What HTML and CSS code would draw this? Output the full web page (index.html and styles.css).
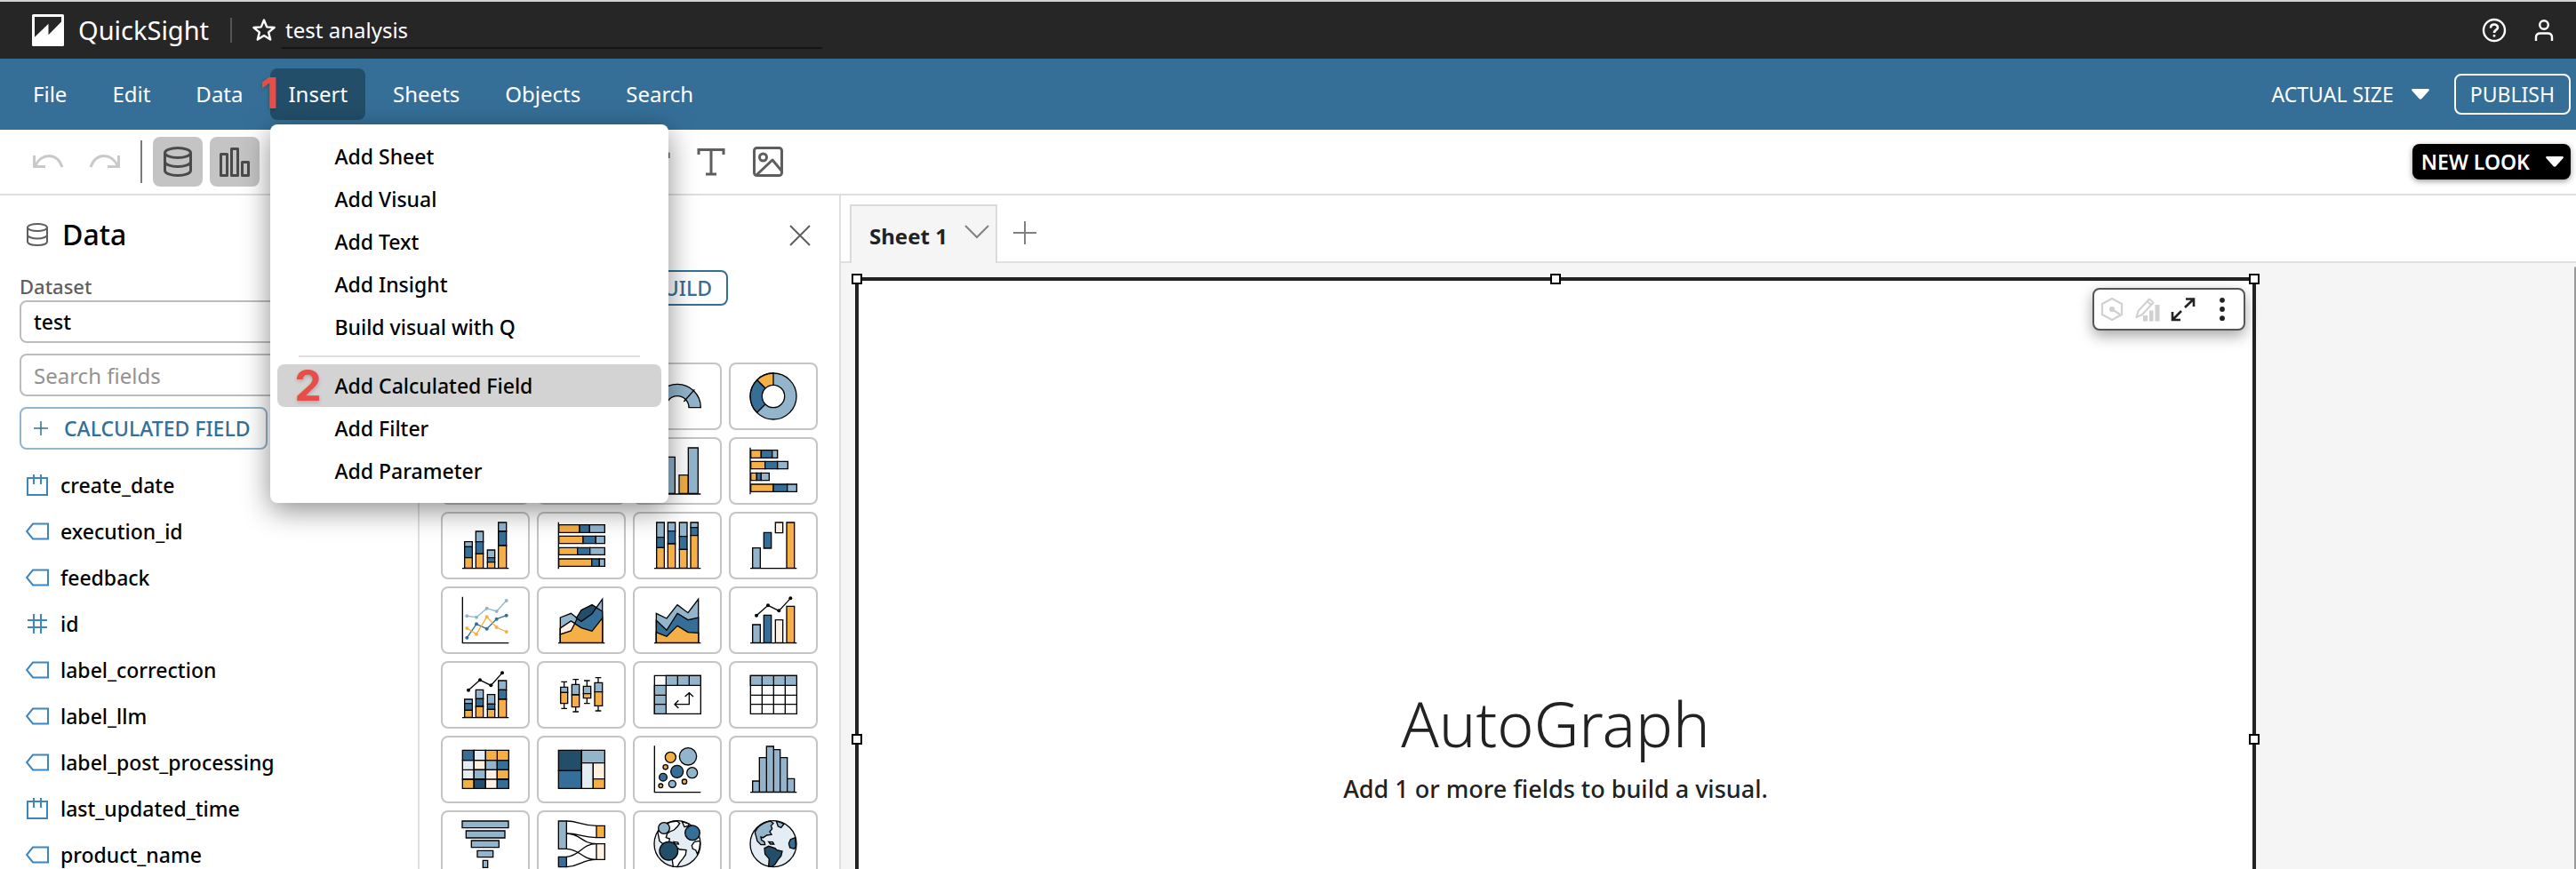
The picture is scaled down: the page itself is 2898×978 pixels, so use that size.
FILE: index.html
```html
<!DOCTYPE html>
<html lang="en">
<head>
<meta charset="utf-8">
<title>test analysis - QuickSight</title>
<link rel="stylesheet" href="styles.css">
</head>
<body>
<header class="topbar">
  <svg class="logo" viewBox="0 0 36 36" aria-hidden="true"><rect width="36" height="36" rx="1.500" fill="#fff"/><path d="M3 3H33V8.500L18.500 23.300V10.700L3 25.800Z" fill="#262626"/></svg>
  <span class="brand">QuickSight</span>
  <span class="topbar-rule"></span>
  <button class="icon-btn star" aria-label="Favorite"><svg viewBox="0 0 28 28"><path d="M14 2.500L17.200 10.400L25.600 11L19.100 16.400L21.200 24.600L14 20.100L6.800 24.600L8.900 16.400L2.400 11L10.800 10.400Z" fill="none" stroke="#fff" stroke-width="2.400" stroke-linejoin="round"/></svg></button>
  <input class="analysis-name" aria-label="Analysis name" value="test analysis">
  <div class="topbar-right">
    <button class="icon-btn" aria-label="Help"><svg viewBox="0 0 28 28" fill="none" stroke="#fff" stroke-width="2.400"><circle cx="14" cy="14" r="12"/><path d="M10 11.500C10 6 18.200 6.500 18 11C17.900 13.800 14 13.600 14 17" stroke-width="2.600"/><path d="M14 19V21.500" stroke-width="2.600"/></svg></button>
    <button class="icon-btn" aria-label="Account"><svg viewBox="0 0 28 28" fill="none" stroke="#fff" stroke-width="2.400"><circle cx="14" cy="8" r="4.800"/><path d="M5 26V22C5 19 7 17.500 10 17.500H18C21 17.500 23 19 23 22V26"/></svg></button>
  </div>
</header>

<nav class="menubar">
  <button class="menu-btn">File</button>
  <button class="menu-btn">Edit</button>
  <button class="menu-btn">Data</button>
  <div class="menu-wrap">
    <button class="menu-btn active" aria-expanded="true">Insert</button>
    <span class="step step-one">1</span>
    <div class="dropdown" role="menu">
      <button role="menuitem">Add Sheet</button>
      <button role="menuitem">Add Visual</button>
      <button role="menuitem">Add Text</button>
      <button role="menuitem">Add Insight</button>
      <button role="menuitem">Build visual with Q</button>
      <hr>
      <button role="menuitem" class="current"><span class="step step-two">2</span>Add Calculated Field</button>
      <button role="menuitem">Add Filter</button>
      <button role="menuitem">Add Parameter</button>
    </div>
  </div>
  <button class="menu-btn">Sheets</button>
  <button class="menu-btn">Objects</button>
  <button class="menu-btn">Search</button>
  <div class="menubar-right">
    <button class="zoom-btn">ACTUAL SIZE <svg class="caret" viewBox="0 0 20 12"><path d="M1 0H19Q20.500 .5 19.500 2L11.500 11Q10 12.500 8.500 11L.5 2Q-.5 .5 1 0Z" fill="currentColor"/></svg></button>
    <button class="publish">PUBLISH</button>
  </div>
</nav>

<div class="toolbar">
  <button class="tool" aria-label="Undo"><svg viewBox="0 0 56 56" fill="none" stroke="#c9c9c9" stroke-width="3"><path d="M12.500 21V33.500H25M13.500 33C20 18 38 17 44 34"/></svg></button>
  <button class="tool" aria-label="Redo"><svg viewBox="0 0 56 56" fill="none" stroke="#c9c9c9" stroke-width="3"><path d="M43.500 21V33.500H31M42.500 33C36 18 18 17 12 34"/></svg></button>
  <span class="tool-rule"></span>
  <button class="tool on" aria-label="Data"><svg viewBox="0 0 56 56" fill="none" stroke="#4a4a4a" stroke-width="3"><ellipse cx="28" cy="18" rx="14.500" ry="5.500"/><path d="M13.500 18V38C13.500 41 20 43.500 28 43.500S42.500 41 42.500 38V18M13.500 28C13.500 31 20 33.500 28 33.500S42.500 31 42.500 28"/></svg></button>
  <button class="tool on" aria-label="Visuals"><svg viewBox="0 0 56 56" fill="none" stroke="#4a4a4a" stroke-width="3" stroke-linejoin="round"><rect x="12.500" y="19.500" width="7" height="24"/><rect x="24.500" y="13.500" width="7" height="30"/><rect x="36.500" y="28.500" width="7" height="15"/></svg></button>
  <div class="tool-group">
    <button class="tool" aria-label="Draw"><svg viewBox="0 0 56 56" fill="none" stroke="#666" stroke-width="3"><path d="M14 42L38 18L44 19V24"/></svg></button>
    <button class="tool" aria-label="Text"><svg viewBox="0 0 56 56" fill="none" stroke="#5e5e5e" stroke-width="3"><path d="M14 20V14.500H42V20M28 14V42M22 42H34"/></svg></button>
    <button class="tool" aria-label="Image"><svg viewBox="0 0 56 56" fill="none" stroke="#5e5e5e" stroke-width="3" stroke-linejoin="round"><rect x="12.500" y="12.500" width="31" height="31" rx="3"/><circle cx="22.500" cy="23" r="4"/><path d="M15 43L33 26L43 38"/></svg></button>
  </div>
  <button class="new-look">NEW LOOK <svg class="caret" viewBox="0 0 20 12"><path d="M1 0H19Q20.500 .5 19.500 2L11.500 11Q10 12.500 8.500 11L.5 2Q-.5 .5 1 0Z" fill="currentColor"/></svg></button>
</div>

<div class="workspace">
  <section class="data-panel">
    <h2><svg viewBox="0 0 24 26" fill="none" stroke="#5e5e5e" stroke-width="2"><ellipse cx="12" cy="5" rx="11" ry="4"/><path d="M1 5V21C1 23.500 6 25 12 25S23 23.500 23 21V5M1 13.500C1 15.500 6 17.500 12 17.500S23 15.500 23 13.500"/></svg>Data</h2>
    <label class="field-label" for="dataset">Dataset</label>
    <select id="dataset" class="box"><option>test</option></select>
    <input class="box" type="search" aria-label="Search fields" placeholder="Search fields">
    <button class="calc"><svg viewBox="0 0 16 16" stroke="currentColor" stroke-width="1.500"><path d="M8 0V16M0 8H16"/></svg>CALCULATED FIELD</button>
    <ul class="fields">
      <li><svg viewBox="0 0 26 26"><use href="#f-date"/></svg>create_date</li>
      <li><svg viewBox="0 0 26 26"><use href="#f-tag"/></svg>execution_id</li>
      <li><svg viewBox="0 0 26 26"><use href="#f-tag"/></svg>feedback</li>
      <li><svg viewBox="0 0 26 26"><use href="#f-num"/></svg>id</li>
      <li><svg viewBox="0 0 26 26"><use href="#f-tag"/></svg>label_correction</li>
      <li><svg viewBox="0 0 26 26"><use href="#f-tag"/></svg>label_llm</li>
      <li><svg viewBox="0 0 26 26"><use href="#f-tag"/></svg>label_post_processing</li>
      <li><svg viewBox="0 0 26 26"><use href="#f-date"/></svg>last_updated_time</li>
      <li><svg viewBox="0 0 26 26"><use href="#f-tag"/></svg>product_name</li>
    </ul>
  </section>

  <section class="visual-panel">
    <div class="visual-head"><button class="icon-btn close" aria-label="Close"><svg viewBox="0 0 24 24" stroke="#5e5e5e" stroke-width="2"><path d="M1 1L23 23M23 1L1 23"/></svg></button></div>
    <div class="build-row"><button class="build">BUILD</button></div>
    <div class="tiles">
      <button class="tile" aria-label="AutoGraph"></button>
      <button class="tile" aria-label="KPI"></button>
      <button class="tile" aria-label="Gauge"><svg viewBox="6 6 288 216"><path class="l" d="M71 152A79 79 0 0 1 229 152H189A39 39 0 0 0 111 152Z"/><path class="n" d="M208 91L172 132"/></svg></button>
      <button class="tile" aria-label="Donut chart"><svg viewBox="6 6 288 216"><circle class="l" cx="150" cy="114" r="78"/><path class="o" d="M150 114L95 59A78 78 0 0 1 150 36Z"/><path class="d" d="M150 114L95 169A78 78 0 0 1 95 59Z"/><circle class="w" cx="150" cy="114" r="38"/></svg></button>

      <button class="tile" aria-label="Horizontal bar chart"></button>
      <button class="tile" aria-label="Grouped horizontal bar chart"></button>
      <button class="tile" aria-label="Vertical bar chart"><svg viewBox="6 6 288 216"><path class="o" d="M80 150H111V190H80ZM156 128H187V190H156Z"/><path class="l" d="M111 67H142V190H111ZM187 36H220V190H187Z"/><path class="n" d="M72 192H229"/></svg></button>
      <button class="tile" aria-label="Stacked horizontal bar chart"><svg viewBox="6 6 288 216"><path class="o" d="M74 44H109V70H74ZM74 82H122V107H74ZM74 121H94V146H74ZM74 159H150V184H74Z"/><path class="d" d="M109 44H146V70H109ZM122 82H164V107H122ZM94 121H109V146H94ZM150 159H197V184H150Z"/><path class="l" d="M146 44H164V70H146ZM164 82H199V107H164ZM109 121H136V146H109ZM197 159H229V184H197Z"/><path class="n" d="M72 35V193"/></svg></button>

      <button class="tile" aria-label="Stacked bar chart"><svg viewBox="6 6 288 216"><path class="l" d="M80 101H106V118H80ZM118 66H143V101H118ZM157 129H182V155H157ZM194 36H221V66H194Z"/><path class="d" d="M80 118H106V155H80ZM118 101H143V142H118ZM157 155H182V170H157ZM194 66H221V114H194Z"/><path class="o" d="M80 155H106V190H80ZM118 142H143V190H118ZM157 170H182V190H157ZM194 114H221V190H194Z"/><path class="n" d="M72 191H229"/></svg></button>
      <button class="tile" aria-label="Full horizontal stacked chart"><svg viewBox="6 6 288 216"><path class="o" d="M74 44H144V70H74ZM74 82H156V107H74ZM74 121H137V145H74ZM74 159H185V184H74Z"/><path class="d" d="M144 44H178V70H144ZM156 82H199V107H156ZM137 121H179V145H137ZM185 159H211V184H185Z"/><path class="l" d="M178 44H229V70H178ZM199 82H229V107H199ZM179 121H229V145H179ZM211 159H229V184H211Z"/><path class="n" d="M73 35V193"/></svg></button>
      <button class="tile" aria-label="Full vertical stacked chart"><svg viewBox="6 6 288 216"><path class="l" d="M80 36H106V86H80ZM118 36H143V65H118ZM157 36H183V83H157ZM195 36H220V53H195Z"/><path class="d" d="M80 86H106V121H80ZM118 65H143V108H118ZM157 83H183V127H157ZM195 53H220V80H195Z"/><path class="o" d="M80 121H106V190H80ZM118 108H143V190H118ZM157 127H183V190H157ZM195 80H220V190H195Z"/><path class="n" d="M72 191H229"/></svg></button>
      <button class="tile" aria-label="Waterfall chart"><svg viewBox="6 6 288 216"><path class="l" d="M80 122H106V190H80Z"/><path class="d" d="M118 70H143V123H118Z"/><path class="c" d="M157 36H182V71H157Z"/><path class="o" d="M195 36H221V190H195Z"/><path class="n" d="M72 191H229"/></svg></button>

      <button class="tile" aria-label="Line chart"><svg viewBox="6 6 288 216"><path class="n" d="M73 35V191H229"/><g class="dots light"><path d="M88 100L120 104L155 74L188 84L221 48"/></g><g class="dots dark"><path d="M88 173L120 127L155 143L188 110L221 98"/></g><g class="dots amber"><path d="M88 141L120 161L155 103L188 138L221 153"/></g></svg></button>
      <button class="tile" aria-label="Area chart"><svg viewBox="6 6 288 216"><path class="l" d="M79 105L115 91L150 118L186 92L221 43V190H79Z"/><path class="d" d="M79 162L115 150L150 80L186 62L221 84V190H79Z"/><path class="v" d="M133 107L150 80L186 62L201 71L186 92L150 118Z"/><path class="o" d="M79 141L115 117L150 140L186 151L221 107V190H79Z"/><path class="c" d="M79 141L115 117L128 125L115 150L79 162Z"/><path class="n" d="M72 191H229"/></svg></button>
      <button class="tile" aria-label="Stacked area chart"><svg viewBox="6 6 288 216"><path class="l" d="M79 91L114 108L150 62L186 89L221 43V190H79Z"/><path class="d" d="M79 115L114 148L150 91L186 113L221 105V190H79Z"/><path class="o" d="M79 155L114 169L150 133L186 155L221 157V190H79Z"/><path class="n" d="M72 191H229"/></svg></button>
      <button class="tile" aria-label="Combo chart"><svg viewBox="6 6 288 216"><path class="l" d="M80 129H106V190H80Z"/><path class="d" d="M118 97H143V190H118Z"/><path class="c" d="M157 113H182V190H157Z"/><path class="o" d="M195 67H221V190H195Z"/><path class="n" d="M72 191H229"/><g class="dots black"><path d="M93 98L132 64L169 82L208 40"/></g></svg></button>

      <button class="tile" aria-label="Stacked combo chart"><svg viewBox="6 6 288 216"><path class="l" d="M80 129H106V143H80ZM118 97H143V127H118ZM157 113H182V145H157ZM194 66H221V97H194Z"/><path class="d" d="M80 143H106V166H80ZM118 127H143V153H118ZM157 145H182V163H157ZM194 97H221V129H194Z"/><path class="o" d="M80 166H106V190H80ZM118 153H143V190H118ZM157 163H182V190H157ZM194 129H221V190H194Z"/><path class="n" d="M72 191H229"/><g class="dots black"><path d="M93 98L132 64L169 82L207 40"/></g></svg></button>
      <button class="tile" aria-label="Box plot"><svg viewBox="6 6 288 216"><path class="n" d="M92 70V160M82 70H102M82 160H102M131 62V171M121 62H141M121 171H141M169 66V143M159 66H179M159 143H179M207 56V168M197 56H217M197 168H217"/><path class="l" d="M80 88H104V106H80ZM118 79H143V114H118ZM157 85H182V110H157ZM195 73H221V104H195Z"/><path class="o" d="M80 106H104V143H80ZM118 114H143V155H118ZM157 110H182V125H157ZM195 104H221V151H195Z"/></svg></button>
      <button class="tile" aria-label="Pivot table"><svg viewBox="6 6 288 216"><path class="w" d="M73 49H229V178H73Z"/><path class="l" d="M112 49H229V82H112ZM73 82H112V178H73Z"/><path class="n" d="M151 49V82M190 49V82M73 115H112M73 146H112M190 108V146H142M176 120L190 107L204 120M154 133L141 146L154 159"/></svg></button>
      <button class="tile" aria-label="Table"><svg viewBox="6 6 288 216"><path class="w" d="M73 49H229V178H73Z"/><path class="l" d="M73 49H229V82H73Z"/><path class="n" d="M112 49V178M151 49V178M190 49V178M73 115H229M73 146H229"/></svg></button>

      <button class="tile" aria-label="Heat map"><svg viewBox="6 6 288 216"><path class="o" d="M151 49H229V83H151ZM190 115H229V147H190ZM73 147H112V178H73Z"/><path class="d" d="M73 49H112V83H73ZM190 83H229V115H190ZM190 147H229V178H190Z"/><path class="p" d="M112 49H151V83H112ZM73 83H112V147H73Z"/><path class="c" d="M112 83H151V115H112ZM151 115H190V178H151Z"/><path class="l" d="M151 83H190V115H151ZM112 115H151V147H112Z"/><path class="v" d="M112 147H151V178H112Z"/><path class="n" d="M112 49V178M151 49V178M190 49V178M73 83H229M73 115H229M73 147H229"/></svg></button>
      <button class="tile" aria-label="Tree map"><svg viewBox="6 6 288 216"><path class="v" d="M73 49H151V118H73Z"/><path class="d" d="M73 118H151V178H73Z"/><path class="l" d="M151 49H229V92H151Z"/><path class="p" d="M151 92H190V178H151Z"/><path class="c" d="M190 92H229V146H190Z"/><path class="o" d="M190 146H229V178H190Z"/></svg></button>
      <button class="tile" aria-label="Scatter plot"><svg viewBox="6 6 288 216"><path class="n" d="M73 34V191H229"/><g class="o"><circle cx="127" cy="73" r="18"/><circle cx="110" cy="106" r="8"/><circle cx="174" cy="155" r="8"/><circle cx="94" cy="169" r="7"/></g><g class="l"><circle cx="186" cy="70" r="29"/><circle cx="200" cy="125" r="18"/><circle cx="133" cy="163" r="12"/></g><g class="d"><circle cx="149" cy="121" r="21"/><circle cx="102" cy="140" r="13"/></g></svg></button>
      <button class="tile" aria-label="Histogram"><svg viewBox="6 6 288 216"><path class="l" d="M80 153H103V190H80ZM103 74H127V190H103ZM127 36H151V190H127ZM151 47H173V190H151ZM173 74H197V190H173ZM197 145H221V190H197Z"/><path class="n" d="M72 191H229"/></svg></button>

      <button class="tile" aria-label="Funnel chart"><svg viewBox="6 6 288 216"><path class="l" d="M72 36H228V59H72ZM85 69H216V93H85ZM103 102H196V125H103ZM123 136H176V158H123ZM142 169H158V193H142Z"/></svg></button>
      <button class="tile" aria-label="Sankey diagram"><svg viewBox="6 6 288 216"><path class="n" d="M100 36C140 36 150 52 201 52M100 78C145 78 150 92 201 92M100 78C150 80 150 112 201 113M100 130C150 133 150 166 201 166M100 157C150 152 150 113 201 113M100 191C150 188 150 166 201 166"/><path class="l" d="M73 36H100V130H73Z"/><path class="d" d="M73 157H100V191H73Z"/><path class="o" d="M201 52H229V92H201Z"/><path class="c" d="M201 113H229V166H201Z"/></svg></button>
      <button class="tile" aria-label="Points on map"><svg viewBox="6 6 288 216"><circle class="p" cx="150" cy="113" r="78"/><path class="w" d="M149 36L158 44L151 54L139 66L125 72L116 78L112 92L124 96L122 108L100 112L90 104L84 74A78 78 0 0 1 149 36Z"/><path class="w" d="M166 38L174 56L187 52L190 46ZM138 106L152 108L154 114L142 113ZM226 103L208 106L199 118L202 130L212 134L218 148A78 78 0 0 0 226 103ZM110 130C130 120 150 126 158 132L180 134L178 150L168 164L158 176L150 190H136L132 160L118 150Z"/><circle class="l" cx="105" cy="60" r="19"/><circle class="d" cx="201" cy="76" r="25"/><circle class="v" cx="121" cy="137" r="31"/></svg></button>
      <button class="tile" aria-label="Filled map"><svg viewBox="6 6 288 216"><circle class="p" cx="150" cy="113" r="78"/><path class="l" d="M140 36L150 44L142 52L146 62L138 72L144 82L128 84L116 92L108 90L110 100L120 106L122 116L108 116L96 104L88 74L96 60A78 78 0 0 1 140 36Z"/><path class="l" d="M160 37L166 54L176 58L186 46A78 78 0 0 0 160 37ZM134 106L148 107L152 114L140 114Z"/><path class="v" d="M120 128L134 121L156 128L162 134L180 138L176 154L166 166L156 182L146 190L134 189L136 164L122 148Z"/><path class="d" d="M224 92L208 98L202 112L206 126L220 130L226 124Z"/></svg></button>
    </div>
  </section>

  <main class="sheet-area">
    <div class="tabs">
      <button class="tab">Sheet 1<svg viewBox="0 0 28 16" fill="none" stroke="#808080" stroke-width="2"><path d="M1 1L14 14L27 1"/></svg></button>
      <button class="icon-btn add-tab" aria-label="Add sheet"><svg viewBox="0 0 26 26" stroke="#808080" stroke-width="2"><path d="M13 0V26M0 13H26"/></svg></button>
    </div>
    <div class="sheet">
      <article class="visual">
        <i class="handle nw"></i><i class="handle north"></i><i class="handle ne"></i><i class="handle west"></i><i class="handle east"></i>
        <div class="visual-tools">
          <button class="vt" aria-label="Insights"><svg viewBox="0 0 28 28" fill="none" stroke="#d0d0d0" stroke-width="2.200" stroke-linejoin="round"><path d="M14 2L25 8V20L14 26L3 20V8Z"/><circle cx="14" cy="14" r="2" fill="#d0d0d0"/><path d="M14 14L23 20"/></svg></button>
          <button class="vt" aria-label="Format visual"><svg viewBox="0 0 28 28"><path d="M1.500 23L3.500 16L16 2.500L20.500 6.500L8 20ZM13.500 5L18 9" fill="none" stroke="#d0d0d0" stroke-width="2" stroke-linejoin="round"/><path d="M9 21H14V27.500H9ZM16 15.500H20.500V27.500H16ZM22.500 9H27.500V27.500H22.500Z" fill="#d0d0d0"/></svg></button>
          <button class="vt" aria-label="Maximize"><svg viewBox="0 0 28 28" fill="none" stroke="#222" stroke-width="2.600"><path d="M17 2.500H26V11M26 2.500L16 12M2 17V26H11M2 26L12 16"/></svg></button>
          <button class="vt" aria-label="More options"><svg viewBox="0 0 28 28" fill="#222"><circle cx="14" cy="3.800" r="2.900"/><circle cx="14" cy="14" r="2.900"/><circle cx="14" cy="24.200" r="2.900"/></svg></button>
        </div>
        <h1>AutoGraph</h1>
        <p>Add 1 or more fields to build a visual.</p>
      </article>
      <span class="scroll-thumb"></span>
    </div>
  </main>
</div>

<svg class="defs" aria-hidden="true">
  <defs>
    <marker id="dot-light" viewBox="0 0 14 14" refX="7" refY="7" markerWidth="14" markerHeight="14" markerUnits="userSpaceOnUse"><circle cx="7" cy="7" r="6" fill="#92b5cc" stroke="none"/></marker>
    <marker id="dot-dark" viewBox="0 0 14 14" refX="7" refY="7" markerWidth="14" markerHeight="14" markerUnits="userSpaceOnUse"><circle cx="7" cy="7" r="6" fill="#356f98" stroke="none"/></marker>
    <marker id="dot-amber" viewBox="0 0 14 14" refX="7" refY="7" markerWidth="14" markerHeight="14" markerUnits="userSpaceOnUse"><circle cx="7" cy="7" r="6" fill="#f4af46" stroke="none"/></marker>
    <marker id="dot-black" viewBox="0 0 14 14" refX="7" refY="7" markerWidth="14" markerHeight="14" markerUnits="userSpaceOnUse"><circle cx="7" cy="7" r="6" fill="#000" stroke="none"/></marker>
    <g id="f-date" fill="none" stroke="#3b85c0" stroke-width="2"><path d="M2 5H24V24H2ZM9 1V12M17 1V12"/></g>
    <g id="f-tag" fill="none" stroke="#3b85c0" stroke-width="2"><path d="M25 4.500V21.500H8L1 13L8 4.500Z"/></g>
    <g id="f-num" fill="none" stroke="#3b85c0" stroke-width="2"><path d="M9 2V24M17 2V24M2 9H24M2 17H24"/></g>
  </defs>
</svg>
</body>
</html>
```
FILE: styles.css
```css
* { box-sizing: border-box; }
body {
  margin: 0;
  height: 100vh;
  display: flex;
  flex-direction: column;
  overflow: hidden;
  background: #fff;
  color: #000;
  font-family: "Noto Sans", "Open Sans", sans-serif;
  font-size: 24px;
  line-height: 32px;
}
button, input, select { font: inherit; color: inherit; }
button { background: none; border: 0; padding: 0; margin: 0; }
svg { display: block; }
.defs { position: absolute; width: 0; height: 0; }

.topbar {
  flex: none;
  display: flex;
  align-items: center;
  height: 66px;
  padding: 0 22px 0 36px;
  border-top: 2px solid #cfd1d2;
  background: #262626;
  color: #fff;
}
.logo { width: 36px; height: 36px; }
.brand { margin-left: 16px; font-size: 29px; }
.topbar-rule { width: 2px; height: 28px; margin: 0 22px 0 24px; background: #555; }
.icon-btn svg { width: 28px; height: 28px; }
.analysis-name {
  flex: 0 0 608px;
  margin-left: 6px;
  padding: 4px;
  border: 0;
  border-bottom: 2px solid #151515;
  background: none;
  height: 42px;
}
.topbar-right { margin-left: auto; display: flex; gap: 28px; }

.menubar {
  flex: none;
  display: flex;
  align-items: center;
  gap: 11px;
  height: 80px;
  padding: 0 6px 0 17px;
  background: #356f98;
  color: #fff;
}
.menu-btn { height: 58px; padding: 0 20px; border-radius: 8px; }
.menu-btn.active { background: #234e69; }
.menu-wrap { position: relative; }
.menubar-right { margin-left: auto; display: flex; align-items: center; gap: 28px; font-size: 23px; }
.caret { width: 20px; height: 12px; }
.zoom-btn { display: flex; align-items: center; gap: 20px; }
.publish { height: 46px; padding: 0 16px; border: 2px solid #fff; border-radius: 8px; }

.dropdown {
  position: absolute;
  z-index: 5;
  top: 63px;
  left: 0;
  width: 448px;
  padding: 12px 8px;
  display: flex;
  flex-direction: column;
  border-radius: 8px;
  background: #fff;
  color: #000;
  font-size: 23px;
  font-weight: 500;
  box-shadow: 0 8px 32px rgba(0, 0, 0, 0.45);
}
.dropdown button { position: relative; height: 48px; padding-left: 64px; border-radius: 8px; text-align: left; }
.dropdown .current { background: #d3d3d3; }
.dropdown hr { width: 384px; height: 2px; margin: 8px auto; border: 0; background: #dedede; }
.step {
  position: absolute;
  color: #e84e48;
  font: 700 48px/48px Inter, "Liberation Sans", sans-serif;
  text-shadow: 0 2px 4px rgba(0, 0, 0, 0.2);
}
.step-one { left: -12px; top: 4px; z-index: 6; }
.step-two { left: 19px; top: 0; }

.toolbar {
  flex: none;
  display: flex;
  align-items: center;
  gap: 8px;
  height: 74px;
  padding: 0 6px 0 26px;
  border-bottom: 2px solid #dfdfdf;
}
.tool { width: 56px; height: 56px; border-radius: 8px; }
.tool svg { width: 56px; height: 56px; }
.tool.on { background: #c4c4c4; }
.tool-rule { width: 2px; height: 48px; margin: 0 4px; background: #7a7a7a; }
.tool-group { display: flex; gap: 8px; margin-left: 408px; }
.new-look {
  display: flex;
  align-items: center;
  gap: 18px;
  height: 40px;
  margin-left: auto;
  padding: 0 8px 0 10px;
  border-radius: 8px;
  background: #000;
  color: #fff;
  font-size: 23px;
  font-weight: 600;
  box-shadow: 0 2px 6px rgba(0, 0, 0, 0.4);
}

.workspace { flex: 1; min-height: 0; display: flex; overflow: hidden; }
.data-panel { flex: none; width: 472px; padding: 24px 22px; border-right: 2px solid #dfdfdf; }
.data-panel h2 { display: flex; align-items: center; gap: 16px; margin: 0 0 22px; padding-left: 8px; font-size: 32px; line-height: 40px; font-weight: 500; }
.data-panel h2 svg { width: 24px; height: 26px; }
.field-label { display: block; color: #5f5f5f; font-size: 22px; font-weight: 500; }
.box {
  display: block;
  width: 100%;
  height: 48px;
  margin-bottom: 12px;
  padding: 0 14px;
  border: 2px solid #bcbcbc;
  border-radius: 8px;
  background: #fff;
  appearance: none;
}
select.box { font-size: 23px; font-weight: 500; }
.box::placeholder { color: #929292; opacity: 1; }
.calc {
  display: flex;
  align-items: center;
  gap: 18px;
  height: 48px;
  padding: 0 17px 0 14px;
  border: 2px solid #92b5cc;
  border-radius: 8px;
  color: #356f98;
  font-size: 23px;
  font-weight: 500;
}
.calc svg { width: 16px; height: 16px; }
.fields { margin: 14px 0 0; padding: 0 0 0 7px; list-style: none; font-size: 23px; font-weight: 500; }
.fields li { display: flex; align-items: center; gap: 13px; height: 52px; }
.fields svg { width: 26px; height: 26px; }

.visual-panel { flex: none; width: 474px; padding: 30px 24px 0; border-right: 2px solid #dfdfdf; overflow: hidden; }
.visual-head { display: flex; justify-content: flex-end; align-items: flex-start; padding: 3px 8px 0 0; height: 54px; }
.close svg { width: 24px; height: 24px; }
.build-row { display: flex; justify-content: flex-end; padding-right: 101px; height: 104px; }
.build { height: 40px; padding: 0 16px; border: 2px solid #356f98; border-radius: 8px; color: #356f98; font-size: 23px; font-weight: 500; line-height: 32px; }
.tiles { display: grid; grid-template-columns: repeat(4, 100px); grid-auto-rows: 76px; gap: 8px; }
.tile { border: 2px solid #c4c4c4; border-radius: 8px; background: #fff; }
.tile svg { width: 96px; height: 72px; stroke: #000; stroke-width: 4; }
.tile .l { fill: #92b5cc; }
.tile .d { fill: #356f98; }
.tile .o { fill: #f4af46; }
.tile .v { fill: #234e69; }
.tile .c { fill: #fef1e2; }
.tile .p { fill: #e4ecf4; }
.tile .w { fill: #fff; }
.tile .n { fill: none; }
.dots { fill: none; }
.dots.light { stroke: #92b5cc; }
.dots.light path { marker: url(#dot-light); }
.dots.dark { stroke: #356f98; }
.dots.dark path { marker: url(#dot-dark); }
.dots.amber { stroke: #f4af46; }
.dots.amber path { marker: url(#dot-amber); }
.dots.black path { marker: url(#dot-black); }

.sheet-area { flex: 1; min-width: 0; display: flex; flex-direction: column; }
.tabs { flex: none; display: flex; align-items: flex-end; height: 76px; padding-left: 10px; border-bottom: 2px solid #dfdfdf; }
.tab {
  display: flex;
  align-items: center;
  gap: 19px;
  height: 66px;
  margin-bottom: -2px;
  padding: 4px 7px 0 20px;
  border: 2px solid #dadada;
  border-bottom: 0;
  background: #f5f5f5;
  color: #222;
  font-weight: 700;
}
.tab svg { width: 28px; height: 16px; margin-top: -10px; }
.add-tab { margin: 0 0 19px 18px; }
.add-tab svg { width: 26px; height: 26px; }
.sheet { position: relative; flex: 1; min-height: 0; padding: 16px 360px 0 16px; background: #f5f5f5; overflow: hidden; }
.visual {
  position: relative;
  display: flex;
  flex-direction: column;
  align-items: center;
  justify-content: center;
  min-height: 1040px;
  padding-top: 12px;
  border: 4px solid #222;
  background: #fff;
  color: #222;
}
.visual h1 { margin: 0; font-size: 70px; line-height: 88px; font-weight: 300; }
.visual p { margin: 12px 0 0; font-size: 27px; line-height: 36px; font-weight: 500; }
.handle { position: absolute; width: 12px; height: 12px; border: 2px solid #000; background: #fff; }
.handle.nw { left: -8px; top: -8px; }
.handle.north { left: calc(50% - 6px); top: -8px; }
.handle.ne { right: -8px; top: -8px; }
.handle.west { left: -8px; top: calc(50% - 6px); }
.handle.east { right: -8px; top: calc(50% - 6px); }
.visual-tools {
  position: absolute;
  top: 8px;
  right: 8px;
  display: flex;
  align-items: center;
  gap: 12px;
  height: 48px;
  padding: 0 10px 0 6px;
  border: 2px solid #555;
  border-radius: 8px;
  background: #fff;
  box-shadow: 0 6px 16px rgba(0, 0, 0, 0.35);
}
.vt svg { width: 28px; height: 28px; }
.vt:last-child { margin-left: 4px; }
.scroll-thumb { position: absolute; right: 0; top: 4px; bottom: 0; width: 2px; border-radius: 2px 0 0 0; background: #999; }
```
